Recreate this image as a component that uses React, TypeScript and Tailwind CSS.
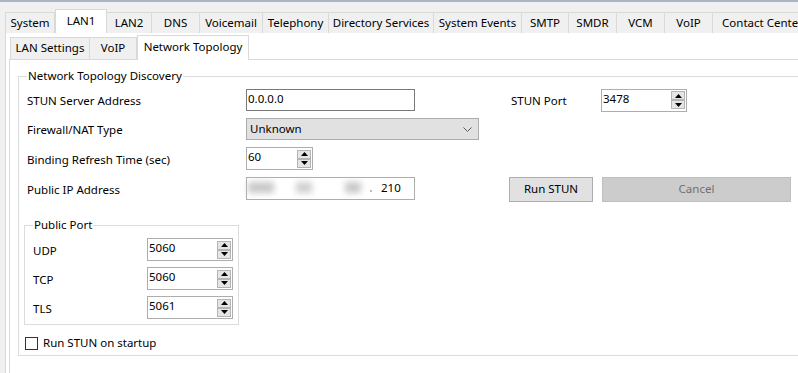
import React from "react";

const mainTabs = [
  { label: "System", w: "w-[50px]" },
  { label: "LAN1", w: "w-[52px]", selected: true },
  { label: "LAN2", w: "w-[45px]" },
  { label: "DNS", w: "w-[48px]" },
  { label: "Voicemail", w: "w-[63px]" },
  { label: "Telephony", w: "w-[66px]" },
  { label: "Directory Services", w: "w-[105px]" },
  { label: "System Events", w: "w-[88px]" },
  { label: "SMTP", w: "w-[47px]" },
  { label: "SMDR", w: "w-[48px]" },
  { label: "VCM", w: "w-[48px]" },
  { label: "VoIP", w: "w-[48px]" },
  { label: "Contact Center", w: "w-[100px]" },
];

const subTabs = [
  { label: "LAN Settings", w: "w-[80px]" },
  { label: "VoIP", w: "w-[47px]" },
  { label: "Network Topology", w: "w-[112px]", selected: true },
];

function Arrow({ up }: { up?: boolean }) {
  return (
    <div className="w-[14px] h-[9px] bg-[#e5e5e5] border border-[#b4b4b4] flex items-center justify-center">
      <svg width="7" height="4" viewBox="0 0 7 4">
        {up ? <path d="M3.5 0L7 4H0z" fill="#000" /> : <path d="M0 0h7L3.5 4z" fill="#000" />}
      </svg>
    </div>
  );
}

function SpinBox({ value, w }: { value: string; w: string }) {
  return (
    <div className={`flex items-center h-[23px] bg-white border border-[#adadad] ${w}`}>
      <span className="flex-1 pl-[1px] pb-[3px]">{value}</span>
      <div className="flex flex-col mr-[1px]">
        <Arrow up />
        <Arrow />
      </div>
    </div>
  );
}

export default function App() {
  return (
    <div className="w-[798px] h-[373px] overflow-hidden bg-[#f0f0f0] text-[11.5px] leading-none text-black font-['Noto_Sans',sans-serif]">
      <div className="h-[2px] bg-[#a9b5c2]" />

      {/* main tabs */}
      <div className="flex items-end h-[31px] pl-[5px] whitespace-nowrap">
        {mainTabs.map((t) =>
          t.selected ? (
            <div
              key={t.label}
              className={`${t.w} shrink-0 h-[24px] flex items-center justify-center bg-white border-x border-t border-[#d9d9d9] pb-[2px]`}
            >
              {t.label}
            </div>
          ) : (
            <div
              key={t.label}
              className={`${t.w} shrink-0 h-[21px] flex items-center justify-center bg-[#f0f0f0] border-t border-r border-[#d9d9d9] first:border-l`}
            >
              {t.label}
            </div>
          )
        )}
      </div>

      <div className="ml-[5px] w-[900px] h-[340px] bg-white border-l border-[#d9d9d9] pl-[3px] pt-[1px]">
        {/* sub tabs */}
        <div className="flex items-end h-[25px] ml-[1px] whitespace-nowrap">
          {subTabs.map((t) =>
            t.selected ? (
              <div
                key={t.label}
                className={`${t.w} shrink-0 h-[25px] -mb-px relative flex items-center justify-center bg-white border-x border-t border-[#d9d9d9] pb-[3px]`}
              >
                {t.label}
              </div>
            ) : (
              <div
                key={t.label}
                className={`${t.w} shrink-0 h-[22px] flex items-center justify-center bg-[#f0f0f0] border-t border-r border-[#d9d9d9] first:border-l pb-[1px]`}
              >
                {t.label}
              </div>
            )
          )}
        </div>

        <div className="h-[320px] border-l border-t border-[#d9d9d9] pl-[8px] pt-[8px]">
          <fieldset className="border border-[#dcdcdc] pl-[8px] pt-[5px] pb-[4px] h-[288px]">
            <legend className="px-[1px] leading-[16px]">Network Topology Discovery</legend>

            <div className="flex flex-col gap-[7px]">
              <div className="flex items-center h-[22px]">
                <div className="w-[219px] shrink-0 pt-[2px]">STUN Server Address</div>
                <div className="w-[169px] h-[22px] border border-[#7a7a7a] flex items-center pl-[1px] pb-[2px]">0.0.0.0</div>
                <div className="ml-[96px] w-[90px] pt-[2px]">STUN Port</div>
                <SpinBox value="3478" w="w-[86px]" />
              </div>

              <div className="flex items-center h-[22px]">
                <div className="w-[219px] shrink-0 pt-[2px]">Firewall/NAT Type</div>
                <div className="w-[233px] h-[22px] bg-[#e1e1e1] border border-[#adadad] flex items-center pl-[3px] pr-[6px] pb-[1px]">
                  <span className="flex-1">Unknown</span>
                  <svg width="9" height="5" viewBox="0 0 9 5" className="mt-[2px]">
                    <path d="M0.5 0.5L4.5 4.5L8.5 0.5" fill="none" stroke="#5a5a5a" strokeWidth="1" />
                  </svg>
                </div>
              </div>

              <div className="flex items-center h-[23px]">
                <div className="w-[219px] shrink-0 pt-[2px]">Binding Refresh Time (sec)</div>
                <SpinBox value="60" w="w-[67px]" />
              </div>

              <div className="flex items-start h-[25px]">
                <div className="w-[219px] shrink-0 h-[23px] flex items-center pt-[2px]">Public IP Address</div>
                <div className="w-[169px] h-[23px] border border-[#adadad] flex items-center pb-[2px]">
                  <span className="w-[26px] h-[11px] ml-[1px] bg-[#c8c8c8] blur-[3px]" />
                  <span className="w-[16px] h-[11px] ml-[22px] bg-[#cfcfcf] blur-[3px]" />
                  <span className="w-[16px] h-[11px] ml-[33px] bg-[#c8c8c8] blur-[3px]" />
                  <span className="w-[2px] h-[2px] ml-[9px] mt-[6px] bg-[#bbbbbb]" />
                  <span className="ml-[9px]">210</span>
                </div>
                <div className="ml-[94px] w-[84px] h-[25px] bg-[#e1e1e1] border border-[#adadad] flex items-center justify-center pb-[2px]">
                  Run STUN
                </div>
                <div className="ml-[9px] w-[189px] h-[25px] bg-[#cccccc] border border-[#bfbfbf] text-[#707070] flex items-center justify-center pb-[2px]">
                  Cancel
                </div>
              </div>
            </div>

            <fieldset className="-ml-[3px] mt-[15px] w-[215px] border border-[#dcdcdc] pl-[8px] pb-[5px]">
              <legend className="px-[1px] leading-[16px]">Public Port</legend>
              <div className="flex flex-col gap-[6px] pt-[5px]">
                {[
                  ["UDP", "5060"],
                  ["TCP", "5060"],
                  ["TLS", "5061"],
                ].map(([k, v]) => (
                  <div key={k} className="flex items-center h-[23px]">
                    <div className="w-[114px] shrink-0 pt-[3px]">{k}</div>
                    <SpinBox value={v} w="w-[86px]" />
                  </div>
                ))}
              </div>
            </fieldset>

            <label className="flex items-center gap-[5px] mt-[12px] -ml-[2px]">
              <span className="w-[13px] h-[13px] border border-[#333333] bg-white" />
              <span className="pb-[1px]">Run STUN on startup</span>
            </label>
          </fieldset>
        </div>
      </div>
    </div>
  );
}
